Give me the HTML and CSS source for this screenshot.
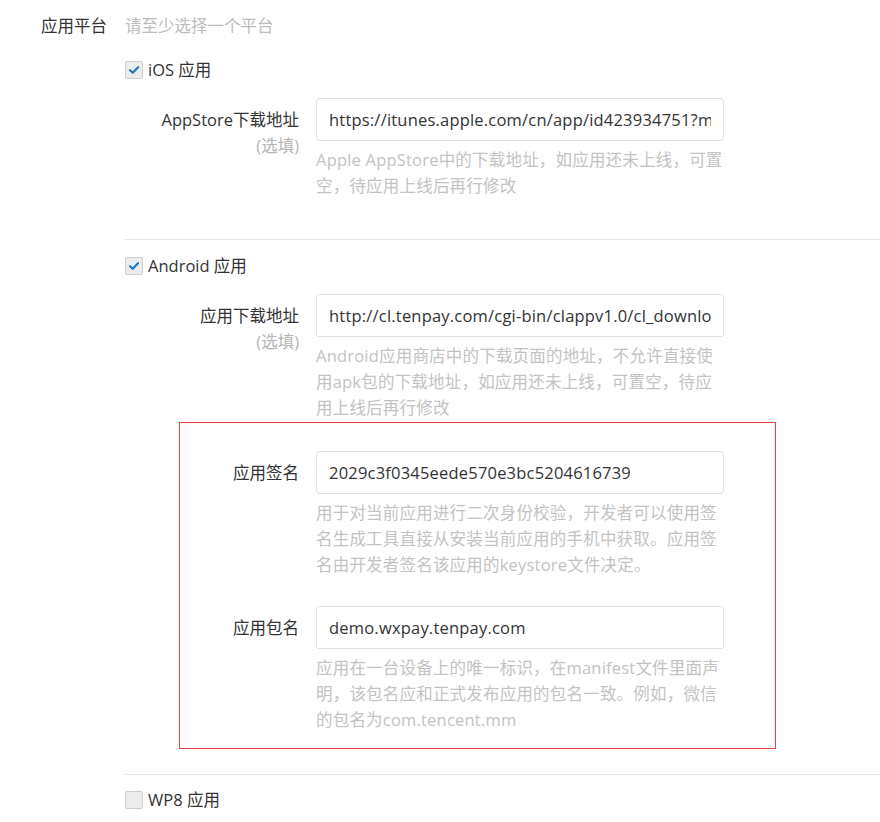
FILE: index.html
```html
<!DOCTYPE html>
<html lang="zh-CN">
<head>
  <meta charset="UTF-8">
  <meta name="viewport" content="width=device-width, initial-scale=1.0">
  <title>应用平台</title>
  <link rel="stylesheet" href="styles.css">
</head>
<body>
  <div class="form">
    <div class="row">
      <div class="row-label">应用平台</div>
      <div class="row-body">
        <div class="tip">请至少选择一个平台</div>

        <div class="platform first">
          <label class="check">
            <span class="box on"><svg viewBox="0 0 18 18" width="18" height="18"><path d="M4.5 9.2 L7.6 12.2 L13.6 5.8" fill="none" stroke="#1a78c4" stroke-width="2.4" stroke-linecap="round" stroke-linejoin="round"/></svg></span>
            iOS 应用
          </label>
          <div class="field">
            <div class="field-label">AppStore下载地址<span class="optional">(选填)</span></div>
            <div class="field-main">
              <input class="text" type="text" value="https://itunes.apple.com/cn/app/id423934751?mt=8">
              <p class="help">Apple AppStore中的下载地址，如应用还未上线，可置空，待应用上线后再行修改</p>
            </div>
          </div>
        </div>

        <div class="platform">
          <label class="check">
            <span class="box on"><svg viewBox="0 0 18 18" width="18" height="18"><path d="M4.5 9.2 L7.6 12.2 L13.6 5.8" fill="none" stroke="#1a78c4" stroke-width="2.4" stroke-linecap="round" stroke-linejoin="round"/></svg></span>
            Android 应用
          </label>
          <div class="field">
            <div class="field-label">应用下载地址<span class="optional">(选填)</span></div>
            <div class="field-main">
              <input class="text" type="text" value="http://cl.tenpay.com/cgi-bin/clappv1.0/cl_download.cgi">
              <p class="help">Android应用商店中的下载页面的地址，不允许直接使用apk包的下载地址，如应用还未上线，可置空，待应用上线后再行修改</p>
            </div>
          </div>

          <div class="sign-box">
            <div class="field">
              <div class="field-label">应用签名</div>
              <div class="field-main">
                <input class="text" type="text" value="2029c3f0345eede570e3bc5204616739">
                <p class="help">用于对当前应用进行二次身份校验，开发者可以使用签名生成工具直接从安装当前应用的手机中获取。应用签名由开发者签名该应用的keystore文件决定。</p>
              </div>
            </div>
            <div class="field">
              <div class="field-label">应用包名</div>
              <div class="field-main">
                <input class="text" type="text" value="demo.wxpay.tenpay.com">
                <p class="help">应用在一台设备上的唯一标识，在manifest文件里面声明，该包名应和正式发布应用的包名一致。例如，微信的包名为com.tencent.mm</p>
              </div>
            </div>
          </div>
        </div>

        <div class="platform last">
          <label class="check">
            <span class="box"></span>
            WP8 应用
          </label>
        </div>
      </div>
    </div>
  </div>
</body>
</html>
```

FILE: styles.css
```css
body {
  margin: 0;
  font-family: "Open Sans", "Noto Sans CJK SC", sans-serif;
  font-size: 16.5px;
  color: #333;
  background: #fff;
}
.form {
  padding-top: 14px;
}
.row {
  display: flex;
}
.row-label {
  width: 107px;
  text-align: right;
  line-height: 24px;
  flex-shrink: 0;
}
.row-body {
  flex: 1;
  margin-left: 18px;
}
.tip {
  line-height: 24px;
  color: #bdbdbd;
}
.platform {
  padding-top: 14px;
  padding-bottom: 40px;
  border-bottom: 1px solid #e6e6e6;
}
.platform.first {
  padding-top: 20px;
}
.platform.last {
  border-bottom: none;
  padding-top: 13px;
  padding-bottom: 10px;
}
.check {
  display: flex;
  align-items: center;
  height: 24px;
  line-height: 24px;
}
.box {
  width: 16px;
  height: 16px;
  border: 1px solid #cfcfcf;
  border-radius: 2px;
  background: #ececec;
  margin-right: 5px;
  display: flex;
  align-items: center;
  justify-content: center;
  overflow: hidden;
}
.field {
  display: flex;
  margin-top: 16px;
}
.field-label {
  width: 174px;
  flex-shrink: 0;
  text-align: right;
  padding-top: 9px;
  line-height: 26px;
}
.optional {
  display: block;
  color: #b5b5b5;
}
.field-main {
  margin-left: 17px;
  width: 408px;
}
.text {
  box-sizing: border-box;
  width: 408px;
  height: 43px;
  padding: 0 12px;
  border: 1px solid #e2e2e2;
  border-radius: 3px;
  font-family: "Open Sans", "Noto Sans CJK SC", sans-serif;
  font-size: 16.5px;
  letter-spacing: 0.2px;
  color: #333;
  outline: none;
}
.help {
  margin: 6px 0 0;
  line-height: 26px;
  letter-spacing: 0.2px;
  color: #c3c3c3;
}
.sign-box {
  margin: 1px 0 0 54px;
  width: 595px;
  border: 1px solid #ea4040;
  padding: 0 0 15px;
}
.sign-box .field {
  margin-top: 28px;
}
.sign-box .field-label {
  width: 119px;
}
.platform:has(.sign-box) {
  padding-bottom: 25px;
}
```
